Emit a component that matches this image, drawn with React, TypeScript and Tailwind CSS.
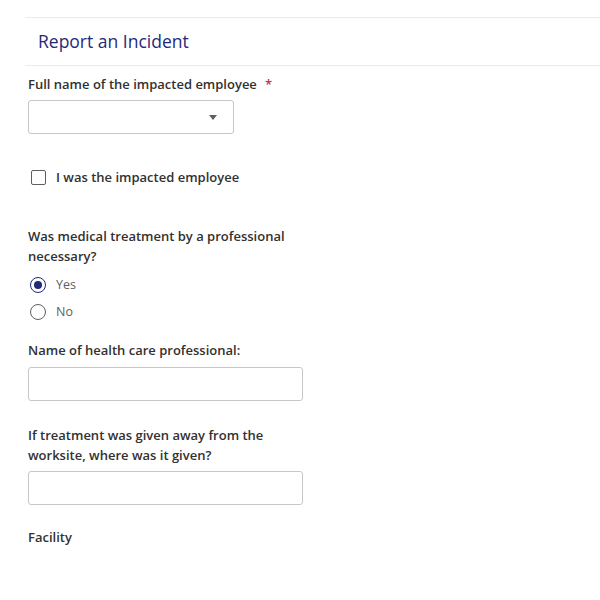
const labelCls = 'text-[13px] leading-[20px] font-semibold text-[#323130]'

const TextBox = ({ className = '' }: { className?: string }) => (
  <div className={`h-[34px] w-[275px] rounded-[3px] border border-[#c8c6c4] bg-white ${className}`} />
)

const Radio = ({ label, checked }: { label: string; checked?: boolean }) => (
  <div className="flex h-[20px] items-center gap-x-[10px]">
    <span
      className={`flex h-[16px] w-[16px] items-center justify-center rounded-full border-[1.5px] ${
        checked ? 'border-[#1f2a78]' : 'border-[#605e5c]'
      }`}
    >
      {checked && <span className="h-[8px] w-[8px] rounded-full bg-[#1f2a78]" />}
    </span>
    <span className="text-[12.5px] text-[#605e5c]">{label}</span>
  </div>
)

const App = () => {
  return (
    <div className="min-h-[600px] bg-white pt-[17px] pl-[25px] font-['Open_Sans',sans-serif]">
      <div className="flex h-[49px] items-center border-y border-[#ebebeb] pl-[13px]">
        <h1 className="text-[17.5px] font-medium text-[#1f2a78]">Report an Incident</h1>
      </div>

      <div className="pl-[3px]">
        <div className={`mt-[8px] ${labelCls}`}>
          Full name of the impacted employee
          <span className="ml-[8px] text-[#c4314b]">*</span>
        </div>
        <div className="mt-[6px] flex h-[34px] w-[206px] items-center justify-end rounded-[3px] border border-[#c8c6c4] bg-white pr-[16px]">
          <svg width="8" height="5" viewBox="0 0 8 5">
            <path d="M0 0h8L4 5z" fill="#605e5c" />
          </svg>
        </div>

        <div className="mt-[33px] flex h-[20px] items-center gap-x-[10px] pl-[3px]">
          <span className="h-[15px] w-[15px] rounded-[2px] border-[1.5px] border-[#605e5c]" />
          <span className={labelCls}>I was the impacted employee</span>
        </div>

        <div className={`mt-[39px] w-[275px] ${labelCls}`}>
          Was medical treatment by a professional necessary?
        </div>
        <div className="mt-[9px] flex flex-col gap-y-[7px] pl-[2px]">
          <Radio label="Yes" checked />
          <Radio label="No" />
        </div>

        <div className={`mt-[18px] ${labelCls}`}>Name of health care professional:</div>
        <TextBox className="mt-[7px]" />

        <div className={`mt-[24px] w-[275px] ${labelCls}`}>
          If treatment was given away from the worksite, where was it given?
        </div>
        <TextBox className="mt-[6px]" />

        <div className={`mt-[22px] ${labelCls}`}>Facility</div>
      </div>
    </div>
  )
}

export default App
